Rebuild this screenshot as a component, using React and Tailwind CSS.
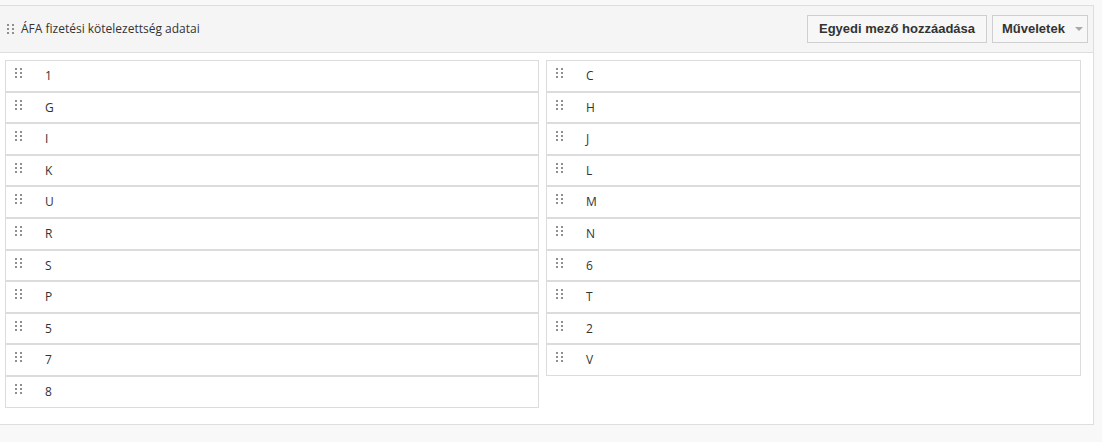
const left = ['1', 'G', 'I', 'K', 'U', 'R', 'S', 'P', '5', '7', '8']
const right = ['C', 'H', 'J', 'L', 'M', 'N', '6', 'T', '2', 'V']

const Handle = ({ className = '' }) => (
  <svg width="7" height="10" viewBox="0 0 7 10" className={className} shapeRendering="crispEdges">
    {[0, 4, 8].map((y) => (
      <g key={y} fill="#8f8f8f">
        <rect x="0" y={y} width="2" height="2" />
        <rect x="5" y={y} width="2" height="2" />
      </g>
    ))}
  </svg>
)

const FieldRow = ({ label }) => (
  <div className="box-border flex h-[31.6px] items-start border border-[#dcdcdc] bg-white">
    <Handle className="ml-[9px] mt-[7px] shrink-0" />
    <span className="ml-[23px] mt-[7px] text-[12px] leading-[16px] text-[#333]">{label}</span>
  </div>
)

export default function App() {
  return (
    <div className="h-[442px] w-[1102px] bg-[#f8f8f8] pt-[5px] font-['Open_Sans',sans-serif]">
      <div className="box-border h-[420px] w-[1094px] border-t border-r border-b border-[#dedede] bg-white">
        <div className="flex h-[47px] items-center border-b border-[#dedede] bg-[#f5f5f5] pl-[7px] pr-[5px]">
          <Handle />
          <span className="ml-[7px] text-[12px] text-[#333]">ÁFA fizetési kötelezettség adatai</span>
          <div className="ml-auto flex gap-[5px] font-['Liberation_Sans',Arial,sans-serif]">
            <button className="box-border h-[28px] w-[180px] border border-[#cfcfcf] bg-[#f7f7f7] text-[13px] font-bold text-[#333]">
              Egyedi mező hozzáadása
            </button>
            <button className="box-border flex h-[28px] w-[96px] items-center border border-[#cfcfcf] bg-[#f7f7f7] pl-[9px] text-[13px] font-bold text-[#333]">
              Műveletek
              <span className="ml-[10px] h-0 w-0 border-x-[4px] border-t-[4px] border-x-transparent border-t-[#a8a8a8]" />
            </button>
          </div>
        </div>
        <div className="grid grid-cols-[534px_535px] gap-x-[7px] pl-[5px] pt-[7px]">
          <div className="flex flex-col">
            {left.map((l) => (
              <FieldRow key={l} label={l} />
            ))}
          </div>
          <div className="flex flex-col">
            {right.map((l) => (
              <FieldRow key={l} label={l} />
            ))}
          </div>
        </div>
      </div>
    </div>
  )
}
